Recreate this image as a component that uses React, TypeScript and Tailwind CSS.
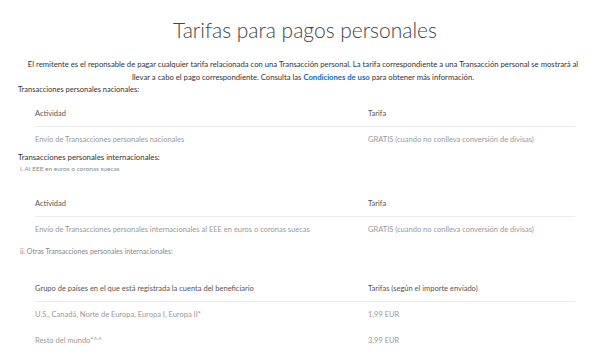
import React from "react";

const font = { fontFamily: "Lato, 'Open Sans', sans-serif" };

function Table({ h1, h2, rows }: { h1: string; h2: string; rows: [string, string][] }) {
  return (
    <div className="ml-[35px] mr-[25px]">
      <div className="flex h-[26px] items-center border-b border-[#ececec] text-[7.5px] text-[#555]">
        <div className="w-[333px]">{h1}</div>
        <div>{h2}</div>
      </div>
      {rows.map((r, i) => (
        <div key={i} className="flex h-[26px] items-center text-[7.5px] text-[#999]">
          <div className="w-[333px]">{r[0]}</div>
          <div>{r[1]}</div>
        </div>
      ))}
    </div>
  );
}

export default function App() {
  return (
    <div className="h-[359px] w-[600px] overflow-hidden bg-white" style={font}>
      <h1 className="pl-[10px] pt-[14px] text-center text-[21px] font-light leading-[32px] text-[#444]">
        Tarifas para pagos personales
      </h1>
      <p className="mx-auto mt-[12px] w-[570px] pl-[6px] text-center text-[7.7px] leading-[13px] text-[#333]">
        El remitente es el reponsable de pagar cualquier tarifa relacionada con una Transacción personal. La tarifa
        correspondiente a una Transacción personal se mostrará al llevar a cabo el pago correspondiente. Consulta las{" "}
        <span className="font-bold text-[#0a6cc2]">Condiciones de uso</span> para obtener más información.
      </p>
      <div className="ml-[18px] text-[7.5px] leading-[12px] text-[#333]">Transacciones personales nacionales:</div>
      <div className="mt-[5px]">
        <Table h1="Actividad" h2="Tarifa" rows={[["Envío de Transacciones personales nacionales", "GRATIS (cuando no conlleva conversión de divisas)"]]} />
      </div>
      <div className="ml-[18px] mt-[-2px] text-[7.8px] leading-[12px] text-[#333]">Transacciones personales internacionales:</div>
      <div className="ml-[20px] text-[6.5px] leading-[12px] text-[#888]">i. Al EEE en euros o coronas suecas</div>
      <div className="mt-[16px]">
        <Table
          h1="Actividad"
          h2="Tarifa"
          rows={[["Envío de Transacciones personales internacionales al EEE en euros o coronas suecas", "GRATIS (cuando no conlleva conversión de divisas)"]]}
        />
      </div>
      <div className="ml-[20px] mt-[2px] text-[7px] leading-[12px] text-[#888]">ii. Otras Transacciones personales internacionales:</div>
      <div className="mt-[19px]">
        <Table
          h1="Grupo de países en el que está registrada la cuenta del beneficiario"
          h2="Tarifas (según el importe enviado)"
          rows={[
            ["U.S., Canadá, Norte de Europa, Europa I, Europa II*", "1,99 EUR"],
            ["Resto del mundo*^^", "3,99 EUR"],
          ]}
        />
      </div>
    </div>
  );
}
